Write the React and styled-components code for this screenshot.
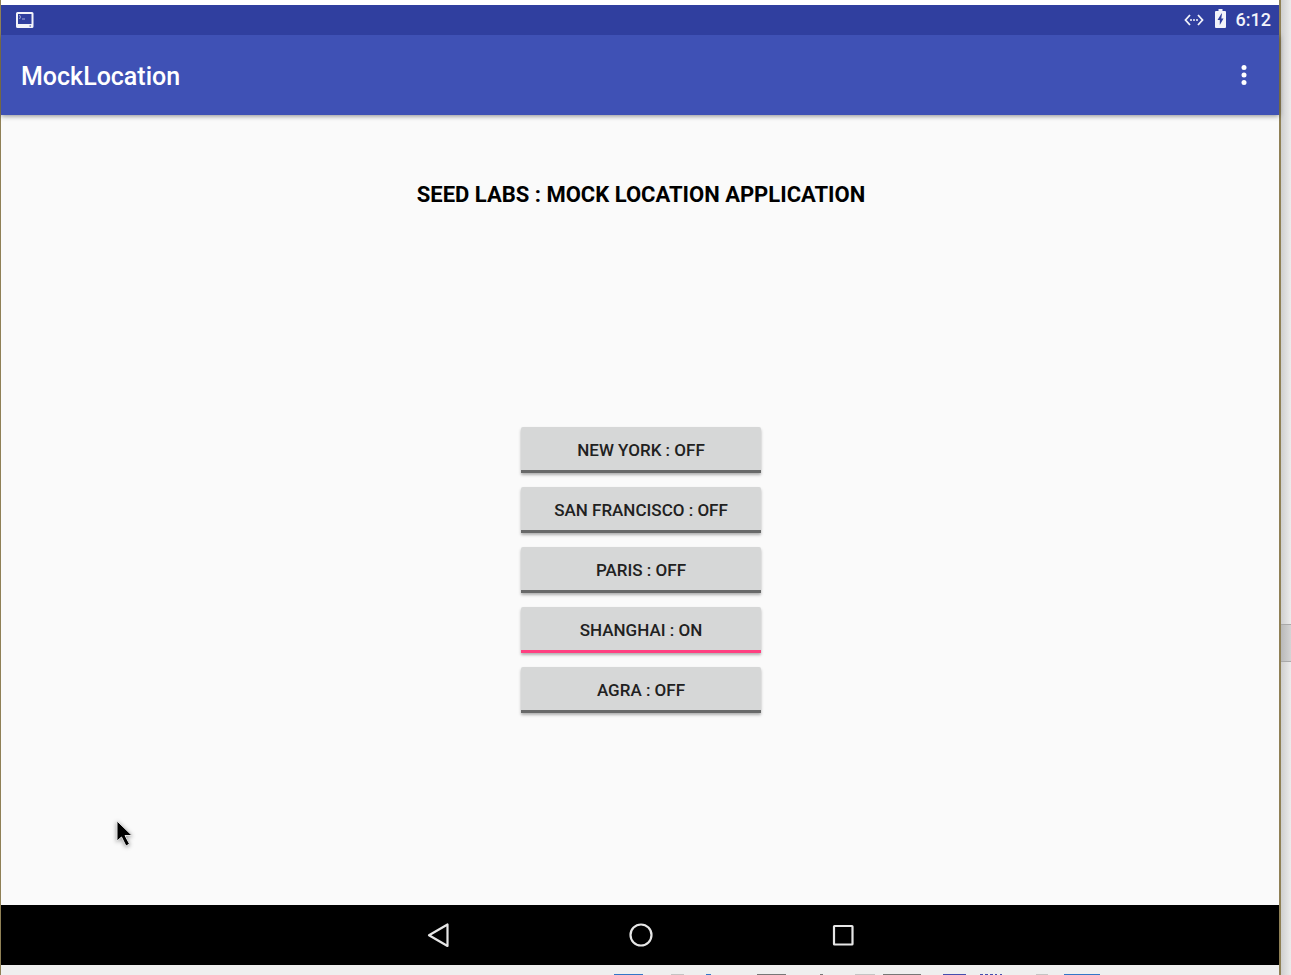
import React, { useState } from "react";
import styled, { createGlobalStyle } from "styled-components";

const GlobalStyle = createGlobalStyle`
  * { box-sizing: border-box; }
  body { margin: 0; background: #fff; font-family: Roboto, "Liberation Sans", sans-serif; }
  svg { display: block; }
`;

const Window = styled.div`
  display: flex;
  min-height: 100vh;
`;

const Device = styled.div`
  position: relative;
  flex: 1;
  display: flex;
  flex-direction: column;
  padding-top: 5px;
  border: solid #8f8055;
  border-width: 0 2px 0 1px;
`;

const ScrollTrack = styled.div`
  width: 10px;
  display: flex;
  flex-direction: column;
  background: linear-gradient(to right, #cfcfcf, #ececec);
`;

const TrackSpace = styled.div`
  flex: ${(p) => p.$grow};
`;

const ScrollThumb = styled.div`
  height: 38px;
  background: linear-gradient(to right, #b9b9b9, #d4d4d4);
  border: solid #a9a9a9;
  border-width: 1px 0;
`;

const StatusBar = styled.div`
  position: relative;
  z-index: 1;
  height: 30px;
  display: flex;
  align-items: center;
  justify-content: space-between;
  padding: 0 8px 0 14px;
  background: #303f9f;
  color: #f2f3fa;
`;

const StatusGroup = styled.div`
  display: flex;
  align-items: center;
`;

const BatterySlot = styled.div`
  padding: 0 10px 3px 11px;
`;

const Clock = styled.time`
  font-size: 18px;
  line-height: 30px;
  font-weight: 500;
`;

const AppBar = styled.header`
  position: relative;
  height: 80px;
  display: flex;
  align-items: center;
  justify-content: space-between;
  padding: 0 19px 0 20px;
  background: #3f51b5;
  color: #fff;
  box-shadow: 0 1px 5px rgba(0, 0, 0, 0.45);
`;

const AppTitle = styled.h1`
  margin: 0;
  padding-top: 4px;
  font-size: 25px;
  line-height: 32px;
  font-weight: 500;
`;

const MenuButton = styled.button`
  width: 32px;
  height: 40px;
  display: flex;
  align-items: center;
  justify-content: center;
  padding: 0;
  border: 0;
  background: none;
  color: inherit;
`;

const Content = styled.main`
  flex: 1;
  display: flex;
  flex-direction: column;
  align-items: center;
  padding: 64px 16px 64px 18px;
  background: #fafafa;
`;

const Heading = styled.h2`
  margin: 0 0 216px;
  font-size: 22px;
  line-height: 32px;
  font-weight: 700;
  color: #000;
`;

const ToggleList = styled.div`
  display: flex;
  flex-direction: column;
  gap: 14px;
`;

const Toggle = styled.button`
  width: 240px;
  height: 46px;
  padding: 3px 0 0;
  border: 0;
  border-bottom: 3px solid ${(p) => (p.$on ? "#ff4081" : "#686969")};
  border-radius: 2px 2px 0 0;
  background: #d6d7d7;
  color: #212121;
  font-family: inherit;
  font-size: 17px;
  font-weight: 500;
  line-height: 24px;
  text-transform: uppercase;
  box-shadow: 0 2px 3px rgba(0, 0, 0, 0.3);
`;

const NavBar = styled.nav`
  height: 60px;
  display: flex;
  align-items: center;
  justify-content: center;
  gap: 162px;
  padding-left: 2px;
  background: #000;
`;

const NavButton = styled.button`
  width: 40px;
  height: 40px;
  display: flex;
  align-items: center;
  justify-content: center;
  padding: 0;
  border: 0;
  background: none;
  color: #e6e6e6;
`;

const HostBar = styled.footer`
  height: 10px;
  display: flex;
  align-items: flex-end;
  justify-content: flex-end;
  padding-right: 178px;
  background: #efefef;
`;

const Pointer = styled.svg`
  position: absolute;
  left: 112px;
  top: 816px;
  filter: drop-shadow(0 1px 2px rgba(0, 0, 0, 0.4));
`;

const TerminalIcon = () => (
  <svg width="20" height="18" viewBox="0 0 20 18" aria-hidden="true">
    <path
      fill="currentColor"
      fillRule="evenodd"
      d="M2.500 1h14.500q1.500 0 1.500 1.500v13q0 1.500-1.500 1.500H2.500Q1 17 1 15.500v-13Q1 1 2.500 1zM3 3v10h13.500V3zM14.500 14.500h1.500v1h-1.500z"
    />
    <path d="M4.500 4l1 2-1 2M7 8h3" fill="none" stroke="currentColor" strokeWidth="1" opacity=".6" />
  </svg>
);

const EthernetIcon = () => (
  <svg width="20" height="12" viewBox="0 0 20 12" aria-hidden="true">
    <path d="M6 1L1.500 6 6 11M14 1l4.500 5L14 11" fill="none" stroke="currentColor" strokeWidth="1.800" />
    <g fill="currentColor">
      <circle cx="7" cy="6" r="1" />
      <circle cx="10" cy="6" r="1" />
      <circle cx="13" cy="6" r="1" />
    </g>
  </svg>
);

const BatteryIcon = () => (
  <svg width="11" height="19" viewBox="0 0 11 19" aria-hidden="true">
    <path
      fill="currentColor"
      fillRule="evenodd"
      d="M3.500 0h4v2H10q1 0 1 1v15q0 1-1 1H1q-1 0-1-1V3q0-1 1-1h2.500zM6.500 4.500L2.500 11h2.300v5L8.500 9.500H6.300L7 4.500z"
    />
  </svg>
);

const MoreIcon = () => (
  <svg width="6" height="20" viewBox="0 0 6 20" fill="currentColor" aria-hidden="true">
    <circle cx="3" cy="2.500" r="2.500" />
    <circle cx="3" cy="10" r="2.500" />
    <circle cx="3" cy="17.500" r="2.500" />
  </svg>
);

const navIcons = {
  Back: <path d="M23.500 4.500v21.500L5 15.200z" />,
  Home: <circle cx="15" cy="15" r="10.500" />,
  Overview: <rect x="6" y="6" width="18.500" height="18.500" rx=".5" />,
};

const NavIcon = ({ name }) => (
  <svg
    width="30"
    height="30"
    viewBox="0 0 30 30"
    fill="none"
    stroke="currentColor"
    strokeWidth="2.200"
    strokeLinejoin="round"
    aria-hidden="true"
  >
    {navIcons[name]}
  </svg>
);

const dockIcons = [
  [0, 29, "#3377c8"],
  [57, 13, "#c4c4c4"],
  [92, 5, "#3377c8"],
  [143, 29, "#777"],
  [206, 3, "#777"],
  [241, 20, "#c4c4c4"],
  [269, 38, "#777"],
  [329, 23, "#454fae"],
  [366, 3, "#454fae"],
  [371, 3, "#454fae"],
  [376, 3, "#454fae"],
  [381, 2, "#454fae"],
  [386, 2, "#454fae"],
  [422, 12, "#c4c4c4"],
  [450, 36, "#3377c8"],
];

const DockIcons = () => (
  <svg width="487" height="1" viewBox="0 0 487 1" aria-hidden="true">
    {dockIcons.map(([x, width, fill]) => (
      <rect key={x} x={x} width={width} height="1" fill={fill} />
    ))}
  </svg>
);

const cities = ["New York", "San Francisco", "Paris", "Shanghai", "Agra"];

export default function App() {
  const [active, setActive] = useState("Shanghai");

  return (
    <Window>
      <GlobalStyle />
      <Device>
        <StatusBar>
          <TerminalIcon />
          <StatusGroup>
            <EthernetIcon />
            <BatterySlot>
              <BatteryIcon />
            </BatterySlot>
            <Clock>6:12</Clock>
          </StatusGroup>
        </StatusBar>
        <AppBar>
          <AppTitle>MockLocation</AppTitle>
          <MenuButton type="button" aria-label="More options">
            <MoreIcon />
          </MenuButton>
        </AppBar>
        <Content>
          <Heading>SEED LABS : MOCK LOCATION APPLICATION</Heading>
          <ToggleList>
            {cities.map((city) => {
              const on = city === active;
              return (
                <Toggle
                  key={city}
                  type="button"
                  $on={on}
                  aria-pressed={on}
                  onClick={() => setActive(on ? null : city)}
                >
                  {city} : {on ? "On" : "Off"}
                </Toggle>
              );
            })}
          </ToggleList>
        </Content>
        <NavBar>
          {Object.keys(navIcons).map((name) => (
            <NavButton key={name} type="button" aria-label={name}>
              <NavIcon name={name} />
            </NavButton>
          ))}
        </NavBar>
        <HostBar>
          <DockIcons />
        </HostBar>
        <Pointer width="22" height="34" viewBox="0 0 22 34" aria-hidden="true">
          <path
            d="M4 5v20l4.500-4 4.500 9 3.500-2-4.500-8.500H19z"
            fill="#000"
            stroke="#e4e4e4"
            strokeWidth="1"
          />
        </Pointer>
      </Device>
      <ScrollTrack>
        <TrackSpace $grow={624} />
        <ScrollThumb />
        <TrackSpace $grow={313} />
      </ScrollTrack>
    </Window>
  );
}
